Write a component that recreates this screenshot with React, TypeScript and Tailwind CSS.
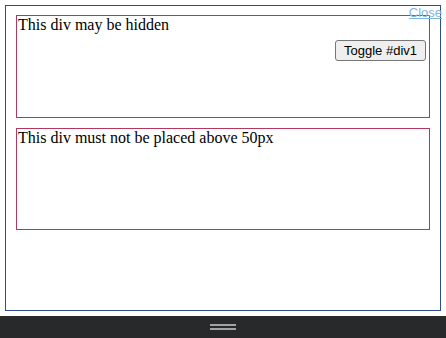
import React from 'react';

const App: React.FC = () => {
    return (
        <div className="w-[446px] h-[338px] flex flex-col bg-white overflow-hidden">
            {/* Outer frame */}
            <div className="pt-[5px] pl-[5px] h-[316px]">
                <div className="relative w-[436px] h-[306px] border border-[#2e4d8c] px-[10px] pt-[9px]">
                    <a
                        href="#"
                        className="absolute -top-[1px] -right-[2px] text-[13px] leading-[16px] text-[#7fb6df] underline font-['Liberation_Sans',Arial,sans-serif]"
                    >
                        Close
                    </a>

                    <div className="flex flex-col gap-[10px] font-['Liberation_Serif','Times_New_Roman',serif] text-[16px] text-black">
                        {/* div1 */}
                        <div className="h-[103px] border border-[#b3385c] pl-px">
                            <p className="leading-[18px]">This div may be hidden</p>
                            <div className="flex justify-end pr-[3px] mt-[6px]">
                                <button className="w-[91px] h-[21px] border border-[#767676] rounded-[3px] bg-[#efefef] text-[13px] leading-none font-['Liberation_Sans',Arial,sans-serif]">
                                    Toggle #div1
                                </button>
                            </div>
                        </div>
                        {/* div2 */}
                        <div className="h-[102px] border border-[#b3385c] pl-px">
                            <p className="leading-[18px]">This div must not be placed above 50px</p>
                        </div>
                    </div>
                </div>
            </div>

            {/* Bottom bar */}
            <div className="flex-1 bg-[#27292b] flex flex-col items-center justify-center gap-[2px]">
                <div className="w-[26px] h-[2px] bg-[#a3a3a3]" />
                <div className="w-[26px] h-[2px] bg-[#a3a3a3]" />
            </div>
        </div>
    );
};

export default App;
